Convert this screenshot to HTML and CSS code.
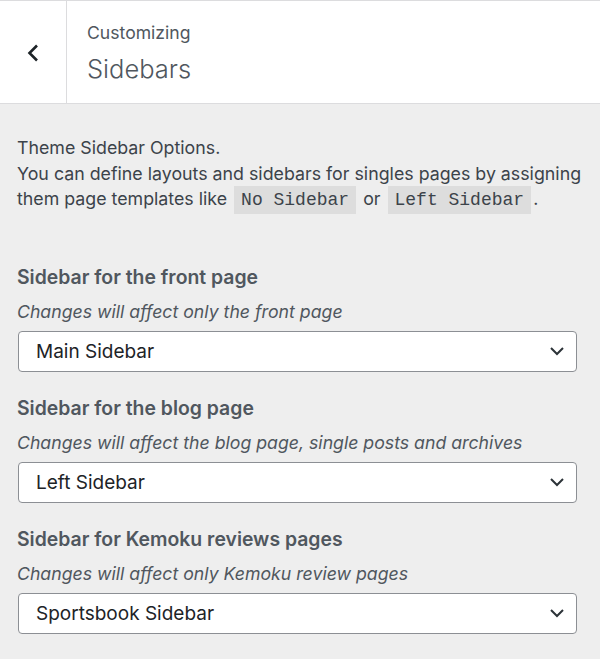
FILE: index.html
```html
<!DOCTYPE html>
<html lang="en">
<head>
<meta charset="utf-8">
<title>Customizing Sidebars</title>
<link rel="stylesheet" href="styles.css">
</head>
<body>
<header class="section-header">
  <button class="back-button" aria-label="Back">
    <svg width="14" height="20" viewBox="0 0 14 20" aria-hidden="true"><path d="M11 2.5 L3.5 10 L11 17.5" fill="none" stroke="#1d2327" stroke-width="2.6"/></svg>
  </button>
  <div class="section-title">
    <span class="action">Customizing</span>
    <h2 class="title">Sidebars</h2>
  </div>
</header>
<main class="content">
  <p class="description">Theme Sidebar Options.<br>You can define layouts and sidebars for singles pages by assigning them page templates like <code>No Sidebar</code> or <code>Left Sidebar</code>.</p>

  <section class="control">
    <h3 class="control-title">Sidebar for the front page</h3>
    <p class="control-desc">Changes will affect only the front page</p>
    <div class="select">
      <span>Main Sidebar</span>
      <svg class="chevron" width="14" height="10" viewBox="0 0 14 10" aria-hidden="true"><path d="M1 2 L7 8 L13 2" fill="none" stroke="#2c3338" stroke-width="2"/></svg>
    </div>
  </section>

  <section class="control">
    <h3 class="control-title">Sidebar for the blog page</h3>
    <p class="control-desc">Changes will affect the blog page, single posts and archives</p>
    <div class="select">
      <span>Left Sidebar</span>
      <svg class="chevron" width="14" height="10" viewBox="0 0 14 10" aria-hidden="true"><path d="M1 2 L7 8 L13 2" fill="none" stroke="#2c3338" stroke-width="2"/></svg>
    </div>
  </section>

  <section class="control">
    <h3 class="control-title">Sidebar for Kemoku reviews pages</h3>
    <p class="control-desc">Changes will affect only Kemoku review pages</p>
    <div class="select">
      <span>Sportsbook Sidebar</span>
      <svg class="chevron" width="14" height="10" viewBox="0 0 14 10" aria-hidden="true"><path d="M1 2 L7 8 L13 2" fill="none" stroke="#2c3338" stroke-width="2"/></svg>
    </div>
  </section>
</main>
</body>
</html>
```

FILE: styles.css
```css
* { box-sizing: border-box; }
html, body {
  margin: 0;
  padding: 0;
  background: #eeeeee;
  font-family: Inter, "Noto Sans", sans-serif;
  color: #3c434a;
}
.section-header {
  display: flex;
  height: 104px;
  background: #fff;
  border-top: 1px solid #dcdcde;
  border-bottom: 1px solid #dcdcde;
}
.back-button {
  width: 67px;
  flex: none;
  border: 0;
  border-right: 1px solid #dcdcde;
  background: #fff;
  padding: 2px 0 0 0;
  display: flex;
  align-items: center;
  justify-content: center;
}
.section-title {
  padding: 20px 0 0 20px;
  display: flex;
  flex-direction: column;
}
.action {
  font-size: 17.6px;
  line-height: 24px;
  color: #50575e;
}
.title {
  margin: 8px 0 0;
  font-size: 25.5px;
  font-weight: 300;
  line-height: 32px;
  color: #50575e;
}
.content {
  padding: 0 0 0 17px;
}
.description {
  margin: 0;
  padding-top: 31px;
  font-size: 17.8px;
  line-height: 25.5px;
  color: #3c434a;
}
code {
  font-family: "Liberation Mono", "DejaVu Sans Mono", monospace;
  font-size: 18px;
  background: #dddddd;
  padding: 4px 7px 4px;
  margin: 0 2px;
  color: #3c434a;
}
.control {
  padding-top: 24px;
}
.content > .control:first-of-type {
  padding-top: 51px;
}
.control-title {
  margin: 0;
  font-size: 19.4px;
  font-weight: 600;
  line-height: 24px;
  color: #50575e;
}
.control-desc {
  margin: 11px 0 7px;
  font-size: 17.7px;
  font-style: italic;
  line-height: 24px;
  color: #50575e;
}
.select {
  margin: 0 23px 0 1px;
  height: 41px;
  display: flex;
  align-items: center;
  justify-content: space-between;
  background: #fff;
  border: 1px solid #8c8f94;
  border-radius: 4px;
  padding: 0 12px 0 17px;
  font-size: 19px;
  color: #1d2327;
}
.chevron { display: block; }
```
